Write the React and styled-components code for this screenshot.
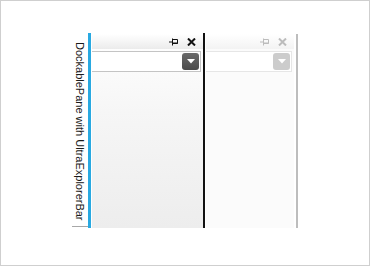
import React from "react";
import styled, { createGlobalStyle } from "styled-components";

const GlobalStyle = createGlobalStyle`
  html, body {
    margin: 0;
    padding: 0;
    background: #ffffff;
  }
  * {
    box-sizing: border-box;
  }
`;

const Frame = styled.div`
  width: 370px;
  height: 266px;
  border: 1px solid #cfcfcf;
  padding: 32px 0 0 71px;
  background: #ffffff;
  font-family: "Liberation Sans", Arial, sans-serif;
`;

const Dock = styled.div`
  display: flex;
  height: 195px;
`;

const Tab = styled.div`
  width: 16px;
  height: 193px;
  margin-top: 1px;
  border-bottom: 1px solid #a8a8a8;
  display: flex;
  justify-content: center;
  padding-top: 8px;
`;

const TabText = styled.span`
  writing-mode: vertical-rl;
  font-size: 11px;
  color: #1a1a1a;
  white-space: nowrap;
  line-height: 14px;
`;

const AccentBar = styled.div`
  width: 3px;
  background: #29a9e1;
`;

const Pane = styled.div`
  width: ${(p) => p.$width}px;
  margin-top: 1px;
  display: flex;
  flex-direction: column;
  background: ${(p) =>
    p.$active
      ? "linear-gradient(to bottom, #ffffff 0%, #f6f6f6 40%, #ededed 100%)"
      : "#fbfbfb"};
`;

const Header = styled.div`
  height: 15px;
  display: flex;
  justify-content: flex-end;
  align-items: center;
  gap: 8px;
  padding-right: 7px;
  background: ${(p) =>
    p.$active
      ? "linear-gradient(to bottom, #ffffff 0%, #ebebeb 100%)"
      : "linear-gradient(to bottom, #ffffff 0%, #f3f3f3 100%)"};
`;

const Combo = styled.div`
  margin: 2px 2px 0 0;
  height: 21px;
  border: 1px solid ${(p) => (p.$active ? "#c4c4c4" : "#e6e6e6")};
  border-left: none;
  background: #ffffff;
  display: flex;
  justify-content: flex-end;
  align-items: center;
  padding-right: 1px;
`;

const DropButton = styled.div`
  width: 17px;
  height: 17px;
  border-radius: 3px;
  display: flex;
  align-items: center;
  justify-content: center;
  background: ${(p) =>
    p.$active
      ? "linear-gradient(to bottom, #6a6a6a 0%, #4a4a4a 100%)"
      : "#cccccc"};
`;

const Divider = styled.div`
  width: 2px;
  background: #111111;
`;

const Gap = styled.div`
  width: 1px;
`;

const EdgeBorder = styled.div`
  width: 2px;
  margin-left: 2px;
  margin-top: 1px;
  background: #bdbdbd;
`;

const PinIcon = ({ color }) => (
  <svg width="10" height="8" viewBox="0 0 10 8">
    <path d="M0 4h3.5" stroke={color} strokeWidth="1" />
    <path d="M3.5 0.5v7" stroke={color} strokeWidth="1" />
    <path d="M3.5 1.5h5v4h-5" stroke={color} strokeWidth="1" fill="none" />
    <path d="M3.5 5h5.5" stroke={color} strokeWidth="1" />
  </svg>
);

const CloseIcon = ({ color }) => (
  <svg width="9" height="8" viewBox="0 0 9 8">
    <path d="M1 0.5L8 7.5M8 0.5L1 7.5" stroke={color} strokeWidth="2" />
  </svg>
);

const Arrow = () => (
  <svg width="8" height="5" viewBox="0 0 8 5">
    <path d="M0 0h8L4 4.5z" fill="#ffffff" />
  </svg>
);

const DockPane = ({ active, width }) => {
  const iconColor = active ? "#111111" : "#bcbcbc";
  return (
    <Pane $active={active} $width={width}>
      <Header $active={active}>
        <PinIcon color={iconColor} />
        <CloseIcon color={iconColor} />
      </Header>
      <Combo $active={active}>
        <DropButton $active={active}>
          <Arrow />
        </DropButton>
      </Combo>
    </Pane>
  );
};

export default function App() {
  return (
    <>
      <GlobalStyle />
      <Frame>
        <Dock>
          <Tab>
            <TabText>DockablePane with UltraExplorerBar</TabText>
          </Tab>
          <AccentBar />
          <Gap />
          <DockPane active width={111} />
          <Divider />
          <Gap />
          <DockPane width={88} />
          <EdgeBorder />
        </Dock>
      </Frame>
    </>
  );
}
